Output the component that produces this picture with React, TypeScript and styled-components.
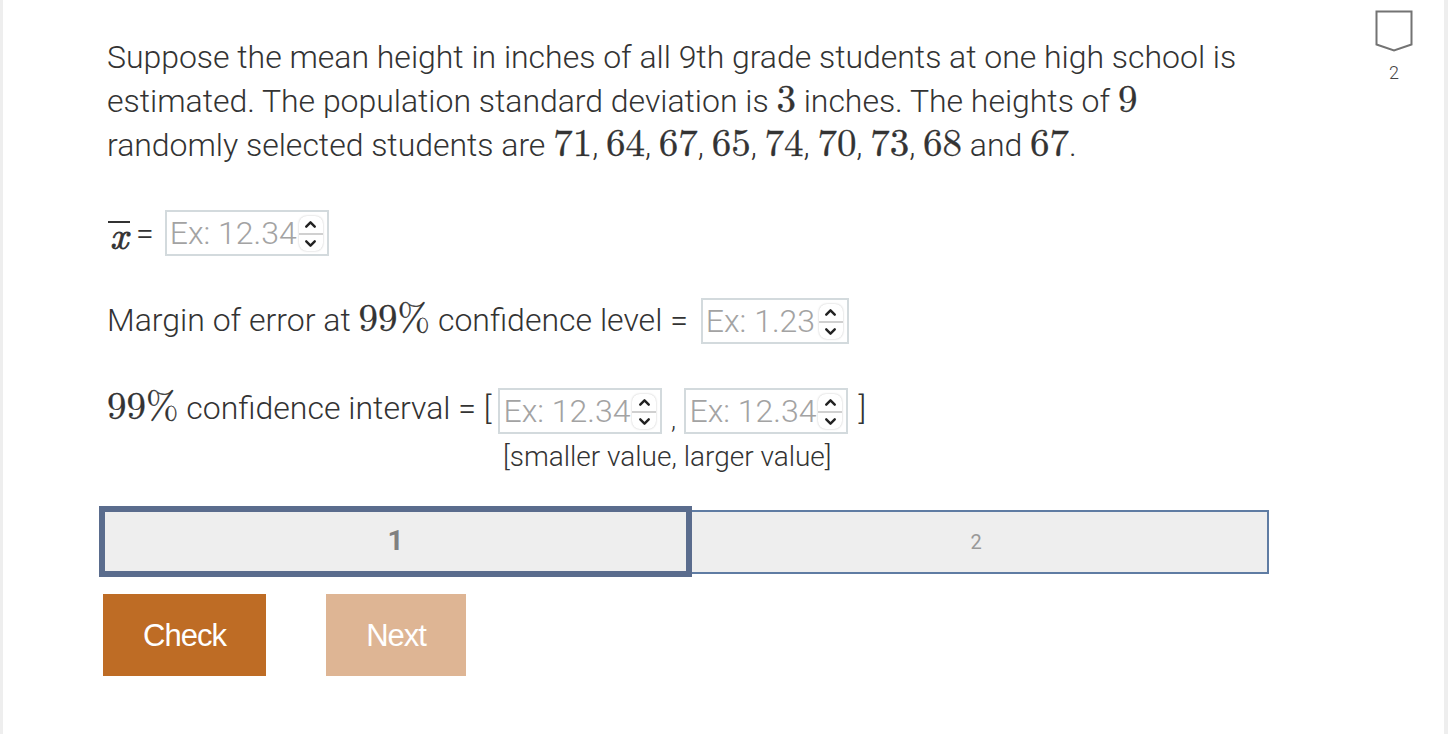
import { ChevronDown, ChevronUp } from 'lucide-react';
import styled, { createGlobalStyle } from 'styled-components';

const GlobalStyle = createGlobalStyle`
  html, body {
    margin: 0;
    background: #fff;
  }
`;

const NumberField = ({ placeholder, width }: { placeholder: string; width: number }) => (
  <FieldBox $width={width}>
    <FieldInput placeholder={placeholder} type='text' readOnly />
    <Spinner>
      <SpinPart>
        <ChevronUp size={17} strokeWidth={3.4} />
      </SpinPart>
      <SpinPart>
        <ChevronDown size={17} strokeWidth={3.4} />
      </SpinPart>
    </Spinner>
  </FieldBox>
);

const App = () => (
  <Page>
    <GlobalStyle />
    <Main>
      <Question>
        Suppose the mean height in inches of all 9th grade students at one high school is
        estimated. The population standard deviation is <M>3</M> inches. The heights of <M>9</M>{' '}
        randomly selected students are <M>71</M>, <M>64</M>, <M>67</M>, <M>65</M>, <M>74</M>,{' '}
        <M>70</M>, <M>73</M>, <M>68</M> and <M>67</M>.
      </Question>

      <Row $top={43}>
        <XBar>x</XBar>
        <Equals>=</Equals>
        <NumberField placeholder='Ex: 12.34' width={164} />
      </Row>

      <Row $top={42}>
        <Label $line={44}>
          Margin of error at <M>99%</M> confidence level =
        </Label>
        <FieldGap>
          <NumberField placeholder='Ex: 1.23' width={148} />
        </FieldGap>
      </Row>

      <Row $top={44}>
        <Label $line={40}>
          <M>99%</M> confidence interval = [
        </Label>
        <Pair>
          <NumberField placeholder='Ex: 12.34' width={164} />
          <Comma>,</Comma>
          <NumberField placeholder='Ex: 12.34' width={164} />
        </Pair>
        <Closing>]</Closing>
      </Row>
      <Caption>[smaller value, larger value]</Caption>

      <Tabs>
        <Tab $active>1</Tab>
        <Tab>2</Tab>
      </Tabs>

      <Actions>
        <ActionButton $width={163}>Check</ActionButton>
        <ActionButton $width={140} $faded>
          Next
        </ActionButton>
      </Actions>
    </Main>

    <Rail>
      <svg width='38' height='42' viewBox='0 0 38 42' fill='none'>
        <path d='M1.5 1.5H36.5V34.5L19 40.5L1.5 34.5Z' stroke='#737373' strokeWidth='2' />
      </svg>
      <RailNumber>2</RailNumber>
    </Rail>
  </Page>
);

export default App;

const Page = styled.div`
  display: flex;
  justify-content: space-between;
  box-sizing: border-box;
  width: 1448px;
  height: 734px;
  overflow: hidden;
  border-left: 3px solid #eee;
  border-right: 4px solid #eee;
  color: #333;
  font-family: Roboto, 'Liberation Sans', sans-serif;
  font-size: 32px;
  font-weight: 300;
`;

const Main = styled.main`
  width: 1166px;
  padding: 35px 0 0 104px;
`;

const Question = styled.p`
  width: 1150px;
  margin: 0;
  letter-spacing: -0.025px;
  line-height: 44px;
`;

const M = styled.span`
  font-family: 'Latin Modern Roman', 'DejaVu Serif', serif;
  font-size: 39px;
  font-weight: 400;
  line-height: 0;
  -webkit-text-stroke: 0.3px #333;
`;

const Row = styled.div<{ $top: number }>`
  display: flex;
  align-items: flex-start;
  height: 46px;
  margin-top: ${({ $top }) => $top}px;
  white-space: pre;
`;

const Label = styled.span<{ $line: number }>`
  line-height: ${({ $line }) => $line}px;
`;

const XBar = styled(M)`
  width: 22px;
  margin: 11px 0 0 1px;
  padding-top: 2px;
  border-top: 2px solid #333;
  font-style: italic;
  line-height: 16px;
  text-align: center;
  -webkit-text-stroke: 0.8px #333;
`;

const Equals = styled.span`
  margin: 0 11px 0 6px;
  line-height: 46px;
`;

const FieldGap = styled.span`
  margin-left: 13px;
`;

const FieldBox = styled.span<{ $width: number }>`
  display: flex;
  align-items: center;
  box-sizing: border-box;
  width: ${({ $width }) => $width}px;
  height: 46px;
  padding: 0 4px 0 3px;
  border: 2px solid #d3dadd;
`;

const FieldInput = styled.input`
  flex: 1;
  min-width: 0;
  padding: 0;
  border: 0;
  outline: 0;
  background: transparent;
  font: inherit;

  &::placeholder {
    color: #a3a3a3;
    opacity: 1;
  }
`;

const Spinner = styled.span`
  display: flex;
  flex-direction: column;
  width: 24px;
  height: 35px;
  overflow: hidden;
  border-radius: 8px;
  box-shadow: 0 0 2px rgba(0, 0, 0, 0.25);
`;

const SpinPart = styled.span`
  display: flex;
  flex: 1;
  align-items: center;
  justify-content: center;
  color: #222;

  &:first-child {
    border-bottom: 2px solid #d0d0d0;
  }
`;

const Pair = styled.span`
  display: flex;
  align-items: flex-start;
  margin-left: 7px;
`;

const Comma = styled.span`
  width: 22px;
  height: 46px;
  font-size: 26px;
  line-height: 62px;
  text-align: center;
`;

const Closing = styled.span`
  margin-left: 10px;
  line-height: 40px;
`;

const Caption = styled.div`
  height: 44px;
  margin-left: 396px;
  font-size: 28px;
  line-height: 46px;
`;

const Tabs = styled.div`
  display: flex;
  align-items: center;
  width: 1170px;
  margin: 28px 0 0 -8px;
`;

const Tab = styled.div<{ $active?: boolean }>`
  display: flex;
  align-items: center;
  justify-content: center;
  box-sizing: border-box;
  width: ${({ $active }) => ($active ? 593 : 577)}px;
  height: ${({ $active }) => ($active ? 71 : 64)}px;
  padding: ${({ $active }) => ($active ? '0 0 2px' : '0 7px 0 0')};
  border: ${({ $active }) => ($active ? '6px solid #5a6c8d' : '2px solid #5f7ca3')};
  border-left-width: ${({ $active }) => ($active ? 6 : 0)}px;
  background: #eee;
  color: ${({ $active }) => ($active ? '#808080' : '#999')};
  font-size: ${({ $active }) => ($active ? 28 : 20)}px;
  font-weight: ${({ $active }) => ($active ? 700 : 400)};
`;

const Actions = styled.div`
  display: flex;
  gap: 60px;
  margin: 17px 0 0 -4px;
`;

const ActionButton = styled.button<{ $width: number; $faded?: boolean }>`
  width: ${({ $width }) => $width}px;
  height: 82px;
  padding: 2px 0 0;
  border: 0;
  background: ${({ $faded }) => ($faded ? '#deb594' : '#be6c25')};
  color: #fff;
  font-family: 'Liberation Sans', Arial, sans-serif;
  font-size: 31px;
  letter-spacing: -1px;
`;

const Rail = styled.aside`
  display: flex;
  flex-direction: column;
  align-items: center;
  margin: 10px 31px 0 0;
`;

const RailNumber = styled.div`
  margin-top: 10px;
  color: #444;
  font-size: 18px;
`;
